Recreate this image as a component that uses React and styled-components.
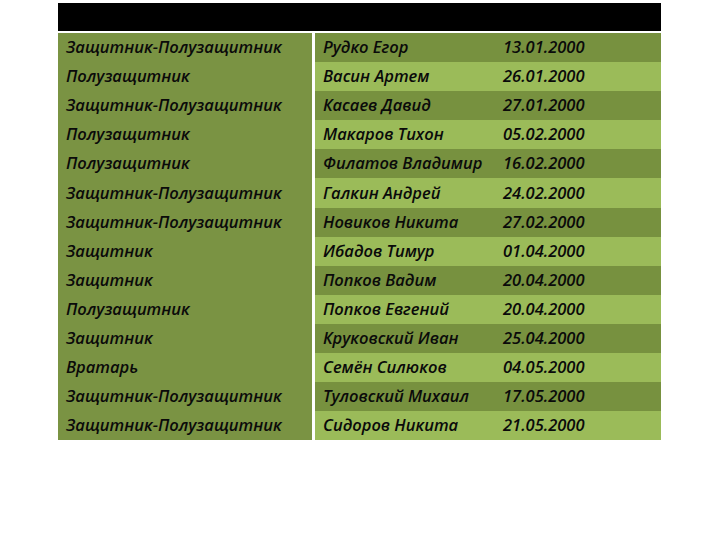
import React from "react";
import styled, { createGlobalStyle } from "styled-components";

const GlobalStyle = createGlobalStyle`
  body {
    margin: 0;
    background: #ffffff;
    font-family: "Open Sans", sans-serif;
  }
`;

const Page = styled.div`
  width: 720px;
  height: 540px;
  padding: 3px 0 0 58px;
  box-sizing: border-box;
`;

const Table = styled.div`
  width: 603px;
  display: flex;
  flex-direction: column;
`;

const Header = styled.div`
  height: 28px;
  background: #000000;
  margin-bottom: 2px;
`;

const Body = styled.div`
  display: grid;
  grid-template-columns: 254px 346px;
  column-gap: 3px;
`;

const LeftCol = styled.div`
  background: #7a9343;
  display: flex;
  flex-direction: column;
`;

const RightCol = styled.div`
  display: flex;
  flex-direction: column;
`;

const Cell = styled.div`
  height: 29.1px;
  display: flex;
  align-items: center;
  padding: 0 0 2px 8px;
  box-sizing: border-box;
  font-family: "Open Sans", sans-serif;
  font-style: italic;
  font-weight: 600;
  font-size: 16.5px;
  color: #0a0a0a;
  white-space: nowrap;
`;

const Row = styled.div`
  height: 29.1px;
  display: grid;
  grid-template-columns: 180px 1fr;
  background: ${(p) => (p.$light ? "#9bbb59" : "#77913f")};
`;

const Value = styled(Cell)`
  height: auto;
`;

const rows = [
  ["Защитник-Полузащитник", "Рудко Егор", "13.01.2000"],
  ["Полузащитник", "Васин Артем", "26.01.2000"],
  ["Защитник-Полузащитник", "Касаев Давид", "27.01.2000"],
  ["Полузащитник", "Макаров Тихон", "05.02.2000"],
  ["Полузащитник", "Филатов Владимир", "16.02.2000"],
  ["Защитник-Полузащитник", "Галкин Андрей", "24.02.2000"],
  ["Защитник-Полузащитник", "Новиков Никита", "27.02.2000"],
  ["Защитник", "Ибадов Тимур", "01.04.2000"],
  ["Защитник", "Попков Вадим", "20.04.2000"],
  ["Полузащитник", "Попков Евгений", "20.04.2000"],
  ["Защитник", "Круковский Иван", "25.04.2000"],
  ["Вратарь", "Семён Силюков", "04.05.2000"],
  ["Защитник-Полузащитник", "Туловский Михаил", "17.05.2000"],
  ["Защитник-Полузащитник", "Сидоров Никита", "21.05.2000"],
];

export default function App() {
  return (
    <Page>
      <GlobalStyle />
      <Table>
        <Header />
        <Body>
          <LeftCol>
            {rows.map((r, i) => (
              <Cell key={i}>{r[0]}</Cell>
            ))}
          </LeftCol>
          <RightCol>
            {rows.map((r, i) => (
              <Row key={i} $light={i % 2 === 1}>
                <Value>{r[1]}</Value>
                <Value>{r[2]}</Value>
              </Row>
            ))}
          </RightCol>
        </Body>
      </Table>
    </Page>
  );
}
